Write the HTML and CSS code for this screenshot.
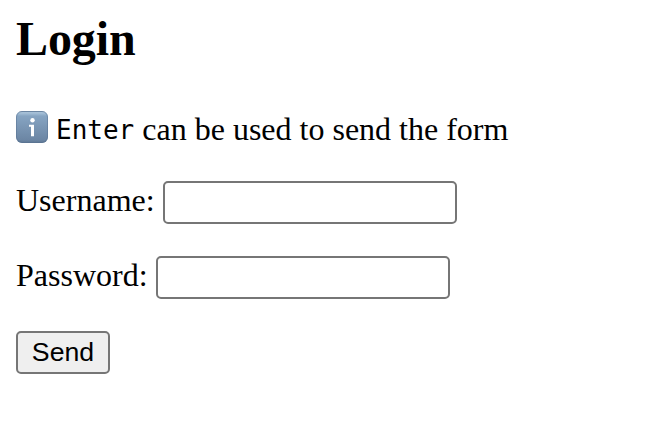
FILE: index.html
```html
<!DOCTYPE html>
<html lang="en">
<head>
<meta charset="utf-8">
<title>Login</title>
<link rel="stylesheet" href="styles.css">
</head>
<body>
<h2 class="title">Login</h2>
<p class="hint">
<svg class="info" viewBox="0 0 32 32" aria-hidden="true">
<defs><linearGradient id="g" x1="0" y1="0" x2="0" y2="1"><stop offset="0" stop-color="#6f8ba8"/><stop offset=".05" stop-color="#a9c3da"/><stop offset=".16" stop-color="#86a4c2"/><stop offset=".9" stop-color="#6c86a4"/><stop offset="1" stop-color="#5c7592"/></linearGradient></defs>
<rect width="32" height="32" rx="6" fill="url(#g)"/>
<rect x=".5" y=".5" width="31" height="31" rx="5.500" fill="none" stroke="#56708f" stroke-opacity=".5"/>
<circle cx="16.500" cy="9.200" r="2.200" fill="#fff"/>
<path d="M13 13.700h5v11.500h-3v-9.500h-2z" fill="#fff"/>
</svg>
<code class="key">Enter</code>
<span class="hint-text">can be used to send the form</span>
</p>
<form class="form">
<div class="row"><label class="label" for="u">Username:</label><input class="field" id="u" type="text"></div>
<div class="row"><label class="label" for="p">Password:</label><input class="field" id="p" type="password"></div>
<button class="send" type="button">Send</button>
</form>
</body>
</html>
```
FILE: styles.css
```css
body {
  margin: 0;
  padding: 12px 16px;
  background: #fff;
  color: #000;
  font: 32px/36px "Liberation Serif", "Times New Roman", serif;
}
.title {
  margin: 0;
  font-size: 48px;
  line-height: 54px;
  letter-spacing: -0.1px;
}
.hint {
  display: flex;
  align-items: center;
  height: 36px;
  margin: 45px 0 34px;
  white-space: nowrap;
}
.info {
  width: 32px;
  height: 32px;
  margin: -4px 8px 0 0;
}
.key {
  margin-right: 8px;
  padding-top: 2px;
  font: 26px/36px "DejaVu Sans Mono", monospace;
}
.hint-text {
  line-height: 34px;
  padding-bottom: 1px;
}
.form {
  display: flex;
  flex-direction: column;
  align-items: flex-start;
  gap: 32px;
}
.row {
  display: flex;
  height: 43px;
  gap: 8px;
}
.label {
  line-height: 38px;
}
.field {
  box-sizing: border-box;
  width: 294px;
  height: 43px;
  margin: 0;
  padding: 2px 4px;
  border: 2px solid #767676;
  border-radius: 5px;
  background: #fff;
  font-size: 26px;
}
.send {
  box-sizing: border-box;
  width: 94px;
  height: 43px;
  padding: 0;
  border: 2px solid #767676;
  border-radius: 5px;
  background: #efefef;
  color: #000;
  font: 26.67px/37px "Liberation Sans", Arial, sans-serif;
}
```
